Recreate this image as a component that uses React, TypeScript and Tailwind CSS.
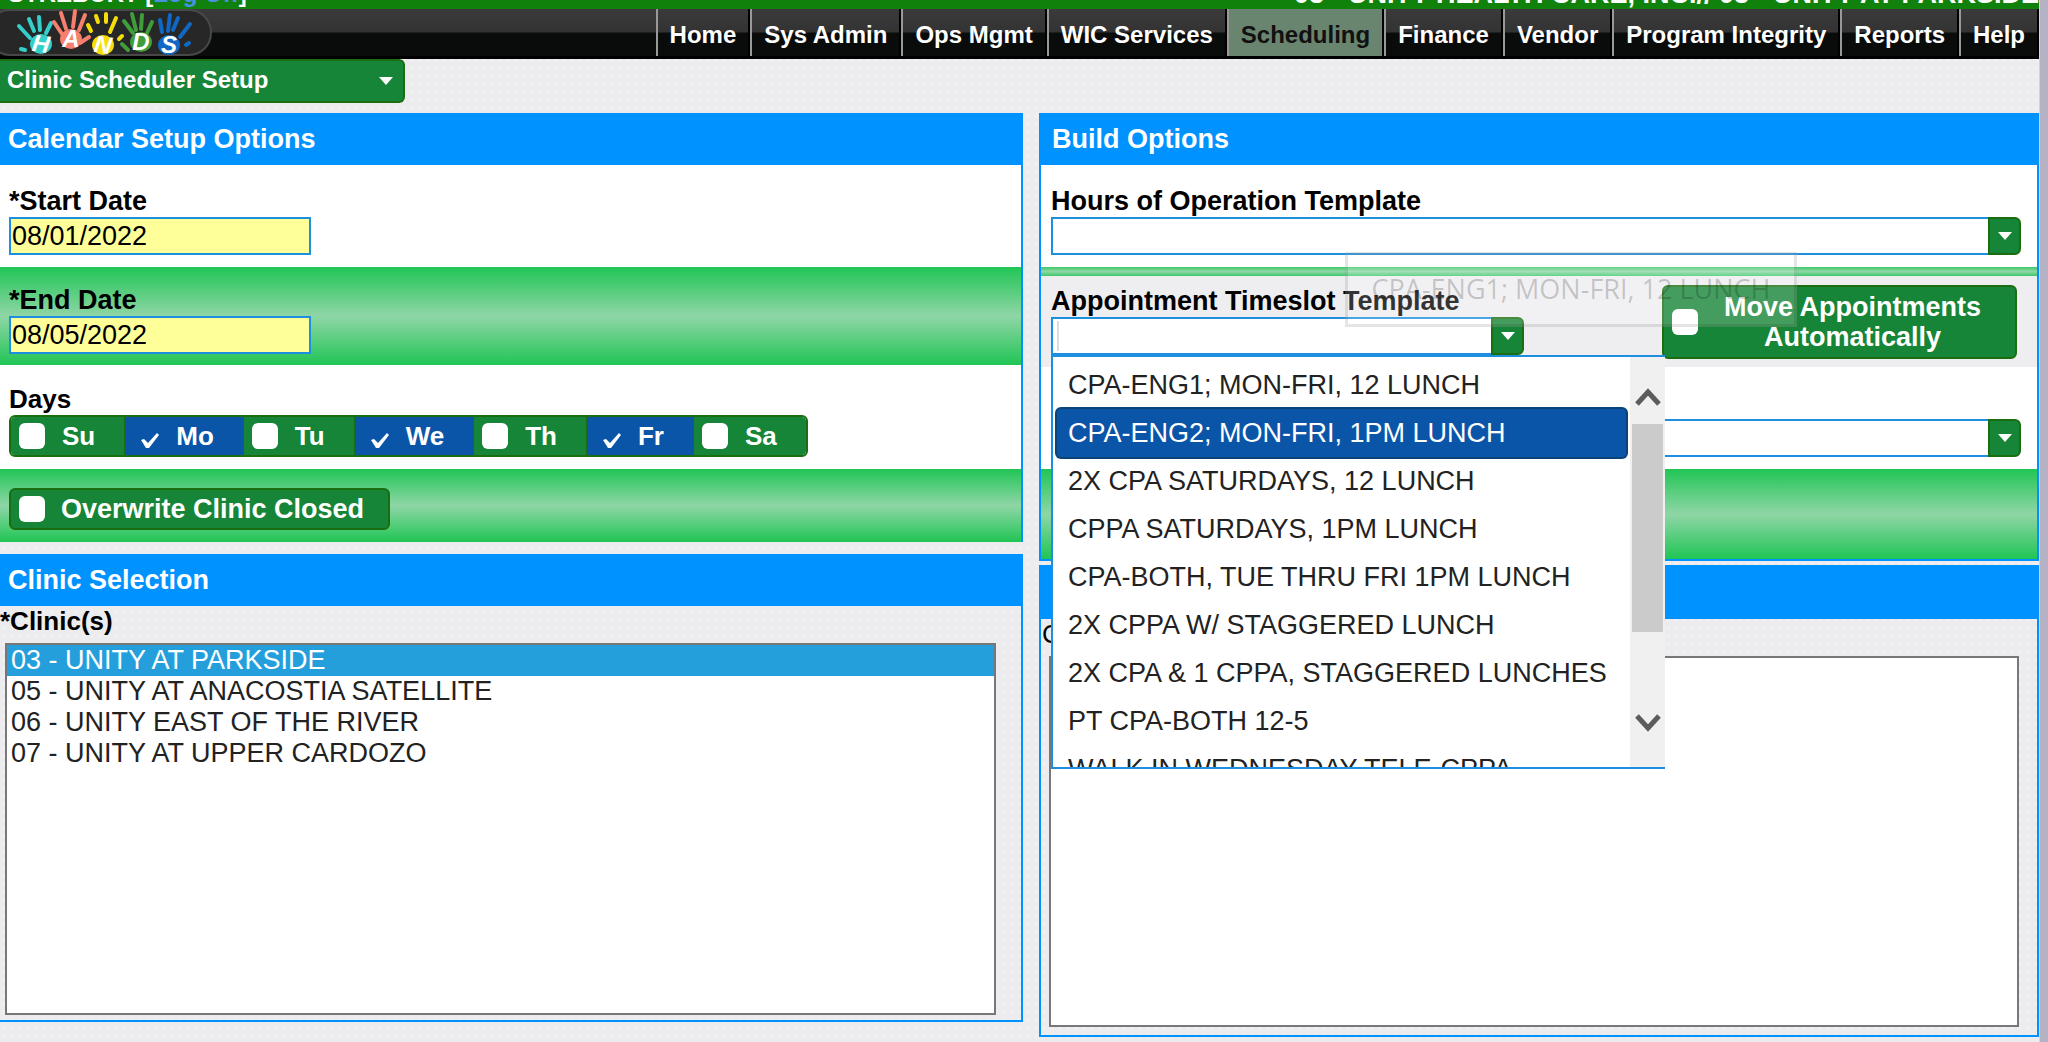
import type { ReactNode } from 'react';

const navItems = [
  'Home',
  'Sys Admin',
  'Ops Mgmt',
  'WIC Services',
  'Scheduling',
  'Finance',
  'Vendor',
  'Program Integrity',
  'Reports',
  'Help'
];

const days = [
  { name: 'Su', checked: false },
  { name: 'Mo', checked: true },
  { name: 'Tu', checked: false },
  { name: 'We', checked: true },
  { name: 'Th', checked: false },
  { name: 'Fr', checked: true },
  { name: 'Sa', checked: false }
];

const clinics = [
  '03 - UNITY AT PARKSIDE',
  '05 - UNITY AT ANACOSTIA SATELLITE',
  '06 - UNITY EAST OF THE RIVER',
  '07 - UNITY AT UPPER CARDOZO'
];

const timeslots = [
  'CPA-ENG1; MON-FRI, 12 LUNCH',
  'CPA-ENG2; MON-FRI, 1PM LUNCH',
  '2X CPA SATURDAYS, 12 LUNCH',
  'CPPA SATURDAYS, 1PM LUNCH',
  'CPA-BOTH, TUE THRU FRI 1PM LUNCH',
  '2X CPPA W/ STAGGERED LUNCH',
  '2X CPA & 1 CPPA, STAGGERED LUNCHES',
  'PT CPA-BOTH 12-5',
  'WALK IN WEDNESDAY TELE-CPPA'
];

const hands = [
  { letter: 'H', color: '#35cfcb', x: 41, y: 44, tilt: 8, d: 'M19 26L30 38M29 19L34 31M39 17L40 30M51 23L46 33M21 49L25 50' },
  { letter: 'A', color: '#f67f6d', x: 71, y: 39, tilt: 0, d: 'M54 22L62 34M61 13L66 29M75 11L73 27M85 15L79 30M89 37L80 43' },
  { letter: 'N', color: '#f5dd08', x: 103, y: 45, tilt: 8, d: 'M88 25L91 31M96 16L98 22M106 14L106 22M116 18L110 32M122 36L119 39' },
  { letter: 'D', color: '#3f9d3a', x: 141, y: 42, tilt: 0, d: 'M124 21L133 33M132 14L136 30M142 15L141 29M152 22L147 33M122 44L128 50' },
  { letter: 'S', color: '#1068c4', x: 169, y: 45, tilt: 0, d: 'M160 20L162 32M170 15L168 31M178 18L173 30M190 24L180 37M186 45L189 43' }
];

function Logo() {
  return (
    <svg width="216" height="59" viewBox="0 0 216 59" role="img" aria-label="HANDS" className="-mt-[9px] shrink-0">
      <rect x="-12" y="10" width="223" height="45" rx="22" fill="#272727" stroke="#484848" strokeWidth="2" />
      {hands.map((hand) => (
        <g key={hand.letter}>
          <path d={hand.d} stroke={hand.color} strokeWidth="4" strokeLinecap="round" fill="none" />
          <ellipse cx={hand.x} cy={hand.y} rx="11" ry="10" fill={hand.color} />
          <text
            x={hand.x}
            y={hand.y + 8}
            transform={`rotate(${hand.tilt} ${hand.x} ${hand.y})`}
            textAnchor="middle"
            fill="#fff"
            fontSize="24"
            fontWeight="bold"
            fontStyle="italic"
            fontFamily="Liberation Sans, sans-serif"
          >
            {hand.letter}
          </text>
        </g>
      ))}
    </svg>
  );
}

function Arrow() {
  return (
    <svg width="14" height="8" viewBox="0 0 14 8" className="pointer-events-none">
      <path d="M0 0H14L7 8Z" fill="#fff" />
    </svg>
  );
}

function SectionTitle({ children }: { children: ReactNode }) {
  return <h2 className="flex h-[52px] items-center bg-[#0092ff] text-[27px] font-bold text-white">{children}</h2>;
}

function Combo({ id, label }: { id: string; label?: string }) {
  return (
    <div className="flex h-[38px] w-full">
      <select
        id={id}
        aria-label={label}
        className="min-w-0 flex-1 appearance-none border-2 border-r-0 border-[#1c8fe0] bg-white px-1 text-[27px]"
      />
      <span className="flex w-[33px] items-center justify-center rounded-r-md border-2 border-[#1b6e10] bg-[#168537]">
        <Arrow />
      </span>
    </div>
  );
}

function Tick({ checked }: { checked?: boolean }) {
  return (
    <span className="relative flex size-[26px] shrink-0 items-center justify-center">
      <input
        type="checkbox"
        defaultChecked={checked}
        className="absolute inset-0 size-full appearance-none rounded-md bg-white checked:bg-transparent"
      />
      {checked && (
        <svg width="20" height="17" viewBox="0 0 20 17" className="relative mt-2 ml-2 shrink-0">
          <path d="M1 8L4 7L8 11L17 1L19 3L9 16L6 16Z" fill="#fff" />
        </svg>
      )}
    </span>
  );
}

function Popup() {
  return (
    <div className="absolute top-full left-0 z-10 flex h-[414px] w-[614px] overflow-hidden border-y-2 border-l-2 border-[#1c8fe0] bg-white">
      <ul role="listbox" aria-label="Appointment Timeslot Template" className="flex-1 px-1 pt-1 text-[27px] text-[#222]">
        {timeslots.map((slot, index) => (
          <li
            key={slot}
            role="option"
            aria-selected={index === 1}
            className={
              index === 1
                ? 'flex h-12 items-center rounded-sm bg-[#0b55a8] pl-[11px] whitespace-nowrap text-white ring-2 ring-[#0a4377]'
                : 'flex h-12 items-center pl-[11px] whitespace-nowrap'
            }
          >
            {slot}
          </li>
        ))}
      </ul>
      <div className="flex w-[35px] shrink-0 flex-col items-center bg-[#f0f0f0]">
        <button type="button" aria-label="Scroll up" className="flex h-[67px] items-center pt-3">
          <svg width="26" height="20" viewBox="0 0 26 20">
            <path d="M2 17L13 5L24 17" stroke="#5c5c5c" strokeWidth="5" fill="none" />
          </svg>
        </button>
        <div className="h-[208px] w-[31px] bg-[#cbcbcb]" />
        <button type="button" aria-label="Scroll down" className="mt-auto flex h-[88px] items-center">
          <svg width="26" height="20" viewBox="0 0 26 20">
            <path d="M2 3L13 15L24 3" stroke="#5c5c5c" strokeWidth="5" fill="none" />
          </svg>
        </button>
      </div>
    </div>
  );
}

export default function App() {
  return (
    <div
      className="flex min-h-screen overflow-hidden bg-[#ececee] bg-[radial-gradient(circle,#f0f0f2_1px,transparent_3px)] bg-[size:8px_8px] text-black"
      style={{ fontFamily: '"Liberation Sans", Arial, sans-serif' }}
    >
      <div className="min-w-0 flex-1">
        {/* user bar */}
        <div className="flex h-[9px] items-end justify-between overflow-hidden bg-[#10820c] leading-[30px] font-bold text-white">
          <p className="pl-2 text-2xl leading-[30px] whitespace-nowrap">
            STREBURY [<a href="#logoff" className="text-[#4a90e0]">Log Off</a>]
          </p>
          <p className="text-[27px] whitespace-nowrap">03 - UNITY HEALTH CARE, INC.// 03 - UNITY AT PARKSIDE</p>
        </div>

        {/* main menu */}
        <header className="flex h-[50px] justify-between border-b-3 border-black bg-[linear-gradient(#3a3a3a_0,#333_23px,#0a0c0b_24px)]">
          <Logo />
          <nav className="flex">
            {navItems.map((item) => (
              <a
                key={item}
                href="#menu"
                className={
                  item === 'Scheduling'
                    ? 'flex items-center border-r-2 border-l-2 border-r-black border-l-[#999] bg-[#69846f] px-3 pt-1 text-2xl font-bold whitespace-nowrap text-[#111]'
                    : 'flex items-center border-r-2 border-l-2 border-r-black border-l-[#999] px-3 pt-1 text-2xl font-bold whitespace-nowrap text-white'
                }
              >
                {item}
              </a>
            ))}
          </nav>
        </header>

        <div className="relative mb-[10px] h-[44px] w-[405px]">
          <select
            aria-label="Page"
            className="size-full appearance-none rounded-r-md border-2 border-l-0 border-[#1b6e10] bg-[#168537] pb-[2px] pl-[7px] text-2xl font-bold text-white"
          >
            <option>Clinic Scheduler Setup</option>
          </select>
          <span className="pointer-events-none absolute inset-y-0 right-3 flex items-center">
            <Arrow />
          </span>
        </div>

        <main className="grid grid-cols-[1023fr_1000fr] items-start gap-4">
          <div>
            {/* calendar setup */}
            <section className="border-r-2 border-[#0092ff] bg-white">
              <SectionTitle>
                <span className="pl-2">Calendar Setup Options</span>
              </SectionTitle>
              <div className="px-[9px] pt-5 pb-3">
                <label htmlFor="start" className="block text-[27px] leading-8 font-bold">*Start Date</label>
                <input
                  id="start"
                  defaultValue="08/01/2022"
                  className="block h-[38px] w-[302px] border-2 border-[#1c8fe0] bg-[#ffff99] px-px text-[27px]"
                />
              </div>
              <div className="bg-[linear-gradient(#20c555,#8fd6a6_50%,#20c555)] px-[9px] pt-[17px] pb-[11px]">
                <label htmlFor="end" className="block text-[27px] leading-8 font-bold">*End Date</label>
                <input
                  id="end"
                  defaultValue="08/05/2022"
                  className="block h-[38px] w-[302px] border-2 border-[#1c8fe0] bg-[#ffff99] px-px text-[27px]"
                />
              </div>
              <fieldset className="px-[9px] pt-[18px] pb-3">
                <legend className="float-left w-full text-[26px] leading-8 font-bold">Days</legend>
                <div className="clear-both flex h-[42px] w-fit overflow-hidden rounded-md border-2 border-[#1b6e10] text-[26px] font-bold text-white">
                  {days.map((day) => (
                    <label
                      key={day.name}
                      className={
                        day.checked
                          ? 'flex items-center gap-[17px] border-r border-[#1b6e10] bg-[#0b55a8] pr-[29px] pl-2 last:border-r-0'
                          : 'flex items-center gap-[17px] border-r border-[#1b6e10] bg-[#168537] pr-[29px] pl-2 last:border-r-0'
                      }
                    >
                      <Tick checked={day.checked} />
                      {day.name}
                    </label>
                  ))}
                </div>
              </fieldset>
              <div className="bg-[linear-gradient(#20c555,#8fd6a6_50%,#20c555)] px-[9px] pt-[19px] pb-3">
                <label className="flex h-[42px] w-fit items-center gap-4 rounded-md border-2 border-[#1b6e10] bg-[#168537] pr-6 pl-2 text-[27px] font-bold text-white">
                  <Tick />
                  Overwrite Clinic Closed
                </label>
              </div>
            </section>

            {/* clinic selection */}
            <section className="mt-3 border-r-2 border-b-2 border-[#0092ff] pb-[5px]">
              <SectionTitle>
                <span className="pl-2">Clinic Selection</span>
              </SectionTitle>
              <label htmlFor="clinics" className="mb-[7px] block text-[26px] leading-[30px] font-bold">*Clinic(s)</label>
              <div className="pr-[25px] pl-[5px]">
                <select
                  id="clinics"
                  multiple
                  defaultValue={[clinics[0]]}
                  className="block h-[372px] w-full overflow-hidden border-2 border-[#777] bg-white text-[27px] text-[#222]"
                >
                  {clinics.map((clinic) => (
                    <option
                      key={clinic}
                      className="h-[31px] min-h-0 p-0 pl-1 leading-[31px] checked:bg-[linear-gradient(#259fdc,#259fdc)] checked:[-webkit-text-fill-color:#fff]"
                    >
                      {clinic}
                    </option>
                  ))}
                </select>
              </div>
            </section>
          </div>

          <div>
            {/* build options */}
            <section className="border-x-2 border-b-2 border-[#0092ff] bg-white">
              <SectionTitle>
                <span className="pl-[11px]">Build Options</span>
              </SectionTitle>
              <div className="pt-5 pr-4 pb-3 pl-[10px]">
                <label htmlFor="hours" className="block text-[27px] leading-8 font-bold">Hours of Operation Template</label>
                <Combo id="hours" />
              </div>
              <div className="h-[9px] bg-[linear-gradient(#3cc968,#8fd6a6_50%,#3cc968)]" />
              <div className="relative flex items-start justify-between bg-[#eeeef0] pt-[9px] pr-5 pb-2 pl-[10px]">
                <div className="relative w-[473px]">
                  <label htmlFor="timeslot" className="block text-[27px] leading-8 font-bold">Appointment Timeslot Template</label>
                  <Combo id="timeslot" />
                  <span className="absolute bottom-1 left-[6px] h-[30px] w-[2px] bg-[#ddd]" />
                  <Popup />
                </div>
                <label className="flex h-[74px] w-[355px] items-center rounded-md border-2 border-[#1b6e10] bg-[#168537] pr-2 pl-2 text-[27px] leading-[30px] font-bold text-white">
                  <Tick />
                  <span className="flex-1 text-center">Move Appointments Automatically</span>
                </label>
                {/* fading tooltip */}
                <div
                  role="tooltip"
                  className="absolute -top-6 left-[304px] z-20 flex h-[75px] w-[452px] items-center justify-center border-3 border-black/10 bg-white/20 font-['Open_Sans'] text-[27px] whitespace-nowrap text-black/20"
                >
                  CPA-ENG1; MON-FRI, 12 LUNCH
                </div>
              </div>
              <div className="pt-[52px] pr-4 pb-3 pl-[10px]">
                <Combo id="template" label="Template" />
              </div>
              <div className="h-[90px] bg-[linear-gradient(#20c555,#8fd6a6_50%,#20c555)]" />
            </section>

            {/* results */}
            <section className="mt-1 border-2 border-[#0092ff] pb-2">
              <div className="h-[52px] bg-[#0092ff]" />
              <label htmlFor="results" className="mb-[7px] block pl-px text-[26px] leading-[30px]">Clinic(s)</label>
              <div className="pr-[18px] pl-2">
                <select id="results" multiple className="block h-[371px] w-full border-2 border-[#777] bg-white text-[27px]" />
              </div>
            </section>
          </div>
        </main>
      </div>
      <div className="w-[9px] shrink-0 border-l border-[#dcd0d4] bg-[#b5b2c6]" />
    </div>
  );
}
